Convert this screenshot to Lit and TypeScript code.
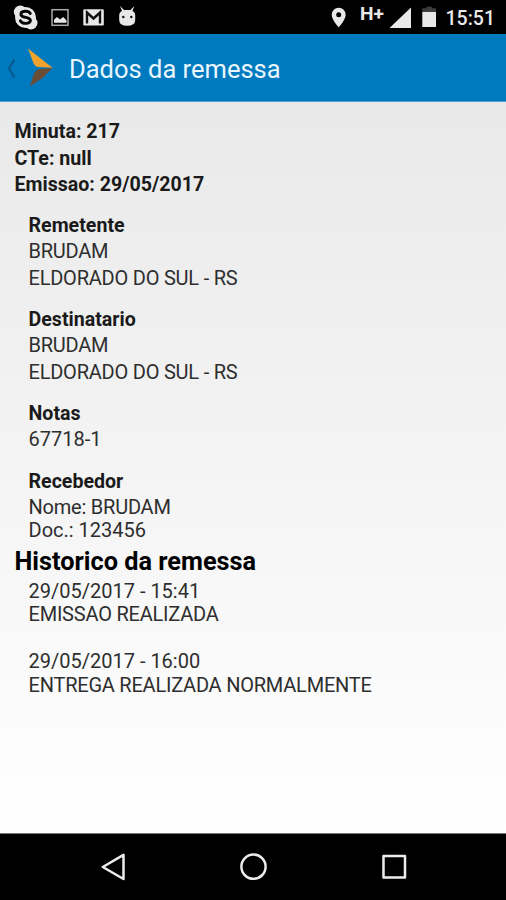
import { LitElement, html, css } from "lit";
import { customElement } from "lit/decorators.js";
import { classMap } from "lit/directives/class-map.js";

interface Section {
  title: string;
  lines: string[];
}

const HEADER = ["Minuta: 217", "CTe: null", "Emissao: 29/05/2017"];

const SECTIONS: Section[] = [
  { title: "Remetente", lines: ["BRUDAM", "ELDORADO DO SUL - RS"] },
  { title: "Destinatario", lines: ["BRUDAM", "ELDORADO DO SUL - RS"] },
  { title: "Notas", lines: ["67718-1"] },
];

const RECEIVER = ["Nome: BRUDAM", "Doc.: 123456"];

const EVENTS = [
  { when: "29/05/2017 - 15:41", what: "EMISSAO REALIZADA" },
  { when: "29/05/2017 - 16:00", what: "ENTREGA REALIZADA NORMALMENTE" },
];

// Lines made of words are set slightly tighter than lines of digits.
const line = (text: string) =>
  html`<div class=${classMap({ caps: !/\d/.test(text) })}>${text}</div>`;

@customElement("status-bar")
export class StatusBar extends LitElement {
  static styles = css`
    :host {
      display: flex;
      justify-content: space-between;
      height: 34px;
      background: #000;
      color: #e8e8e8;
      font: 500 19.5px/34px Roboto, sans-serif;
    }
    svg { display: block; }
    .clock { margin: 2px 11px 0 0; }
    .right { display: flex; }
  `;

  render() {
    return html`
      <svg width="150" height="34" fill="#e8e8e8">
        <circle cx="25.500" cy="17.500" r="10.500" />
        <circle cx="20.300" cy="12" r="6.500" />
        <circle cx="31" cy="23" r="6.500" />
        <path d="M30.300 13.500C28.500 10.300 20.700 10.600 20.900 14.300C21.200 18.500 30.600 16.200 30.400 20.500C30.200 24.200 22.200 24.300 20.400 20.800" fill="none" stroke="#050505" stroke-width="2.900" stroke-linecap="round" />
        <rect x="52" y="9.700" width="16" height="15.600" fill="#000" stroke="#aaa" stroke-width="1.500" />
        <path d="M54 22.800V19.800L57 17L60 19.600L63.200 17L66.500 20.500V22.800Z" />
        <rect x="83.300" y="9.300" width="20.500" height="16.200" rx="1.200" />
        <path d="M87 23.500V12.500L93.500 18.500L100 12.500V23.500" fill="none" stroke="#111" stroke-width="2.400" />
        <path d="M119.200 15.500Q119.200 12 122 11L120 6L124 10H130.500L134.300 6L132.500 11Q135.200 12 135.200 15.500V20Q135.200 25.800 127.200 25.800Q119.200 25.800 119.200 20Z" />
        <circle cx="123.300" cy="17" r="1.200" fill="#111" />
        <circle cx="131.300" cy="17" r="1.200" fill="#111" />
      </svg>
      <div class="right">
        <svg width="120" height="34" viewBox="326 0 120 34" fill="#e8e8e8">
          <path fill-rule="evenodd" d="M338.700 7.700A7 7 0 0 0 331.700 14.700C331.700 19.700 338.700 27.300 338.700 27.300S345.700 19.700 345.700 14.700A7 7 0 0 0 338.700 7.700ZM338.700 12.200A2.500 2.500 0 1 1 338.700 17.200A2.500 2.500 0 1 1 338.700 12.200Z" />
          <text x="360" y="19.500" font-size="18.500" font-weight="700" textLength="24" lengthAdjust="spacingAndGlyphs">H+</text>
          <path d="M411 7.500V28H389.500Z" />
          <path d="M426.300 8.200V6.700H432V8.200H436V12H422.300V8.200Z" fill="#3c3c3c" />
          <rect x="422.300" y="12" width="13.700" height="15" />
        </svg>
        <span class="clock">15:51</span>
      </div>
    `;
  }
}

@customElement("title-bar")
export class TitleBar extends LitElement {
  static styles = css`
    :host {
      display: flex;
      box-sizing: border-box;
      height: 68px;
      background: #007abf;
      border-bottom: 1px solid #5c9fca;
      color: #e9f6fd;
      font: 400 25.5px/70px Roboto, sans-serif;
    }
    svg { display: block; flex: none; width: 69px; height: 67px; }
  `;

  render() {
    return html`
      <svg viewBox="0 34 69 67">
        <path d="M14.500 59.500L9 68.500L14.500 77.500" fill="none" stroke="#075a8c" stroke-width="2.300" />
        <path d="M28 48.500L52.500 67.800L37.500 67Q34.500 66 33 62Z" fill="#f0a22e" />
        <path d="M52.500 68L42.500 78L29.800 86.500L33.500 75Q35.500 69.300 40.500 69Z" fill="#6b4c35" />
      </svg>
      <span>Dados da remessa</span>
    `;
  }
}

@customElement("nav-bar")
export class NavBar extends LitElement {
  static styles = css`
    :host {
      display: flex;
      box-sizing: border-box;
      height: 67px;
      background: #000;
      border-top: 1px solid #777;
    }
    svg { display: block; }
  `;

  render() {
    return html`
      <svg width="506" height="66" viewBox="0 834 506 66" fill="none" stroke="#ececec" stroke-width="2.500" stroke-linejoin="round">
        <path d="M102.800 867L123.500 854.800V879Z" />
        <circle cx="253.500" cy="866.700" r="12.100" />
        <rect x="383.500" y="856" width="21.500" height="21.500" />
      </svg>
    `;
  }
}

@customElement("app-root")
export class AppRoot extends LitElement {
  static styles = css`
    :host {
      display: flex;
      flex-direction: column;
      height: 900px;
      overflow: hidden;
      background: #000;
      font-family: Roboto, sans-serif;
    }
    main {
      flex: 1;
      box-sizing: border-box;
      padding: 15px 14.500px 0;
      background: linear-gradient(#e9e9e9, #ffffff);
      color: #2e2e2e;
      font-size: 20px;
      line-height: 26.800px;
      white-space: nowrap;
    }
    .strong { color: #1a1a1a; font-weight: 700; font-size: 19.600px; padding-top: 1.800px; line-height: 25px; }
    .caps { letter-spacing: -0.220px; }
    .indent { padding-left: 14px; }
    .section { margin-top: 13.800px; }
    .tight { line-height: 23.400px; }
    .lead { padding-top: 2px; }
    .history { color: #000; font-weight: 700; font-size: 25.300px; line-height: 30px; margin: 4px 0 3.400px; }
    .event { margin-bottom: 23.400px; }
  `;

  render() {
    return html`
      <status-bar></status-bar>
      <title-bar></title-bar>
      <main>
        ${HEADER.map((l) => html`<div class="strong">${l}</div>`)}
        ${SECTIONS.map(
          (s) => html`
            <div class="section indent">
              <div class="strong">${s.title}</div>
              ${s.lines.map(line)}
            </div>
          `
        )}
        <div class="section indent">
          <div class="strong">Recebedor</div>
          <div class="tight lead">${RECEIVER.map(line)}</div>
        </div>
        <div class="history">Historico da remessa</div>
        ${EVENTS.map(
          (e) => html`<div class="event indent tight">${line(e.when)}${line(e.what)}</div>`
        )}
      </main>
      <nav-bar></nav-bar>
    `;
  }
}
